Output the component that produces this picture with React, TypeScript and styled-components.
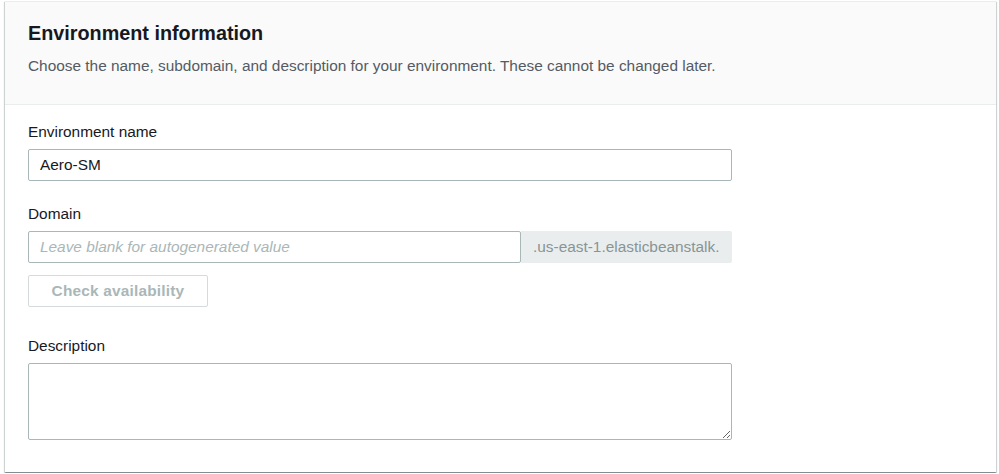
import React from 'react'
import styled, { createGlobalStyle } from 'styled-components'

const GlobalStyle = createGlobalStyle`
  body {
    margin: 0;
    background: #ffffff;
    font-family: "Liberation Sans", Arial, sans-serif;
    font-size: 15.4px;
    color: #16191f;
  }
`

const Page = styled.div`
  padding: 1px 3px 1px 5px;
`

const Panel = styled.section`
  background: #ffffff;
  box-shadow: 0 1px 1px 0 rgba(0, 28, 36, 0.3), 1px 1px 1px 0 rgba(0, 28, 36, 0.15),
    -1px 1px 1px 0 rgba(0, 28, 36, 0.15);
  border-top: 1px solid #eaeded;
`

const Header = styled.div`
  background: #fafafa;
  border-bottom: 1px solid #eaeded;
  padding: 19px 23px 28px;

  h2 {
    margin: 0;
    font-size: 19.8px;
    line-height: 24px;
    font-weight: 700;
    color: #16191f;
  }
  p {
    margin: 11px 0 0;
    font-size: 15.4px;
    line-height: 20px;
    color: #545b64;
  }
`

const Body = styled.div`
  padding: 17px 23px 32px;
  display: flex;
  flex-direction: column;
`

const Field = styled.div<{ $gap?: number }>`
  display: flex;
  flex-direction: column;
  width: 704px;
  margin-top: ${p => p.$gap ?? 0}px;
`

const Label = styled.label`
  font-size: 15.4px;
  line-height: 20px;
  color: #16191f;
  margin-bottom: 7px;
`

const TextInput = styled.input`
  box-sizing: border-box;
  height: 32px;
  width: 100%;
  border: 1px solid #aab7b8;
  border-radius: 2px;
  padding: 0 11px;
  font-family: "Liberation Sans", Arial, sans-serif;
  font-size: 15.4px;
  color: #16191f;
  background: #ffffff;
  outline: none;

  &::placeholder {
    color: #aab7b8;
    font-style: italic;
  }
`

const DomainRow = styled.div`
  display: flex;
  align-items: stretch;
  height: 32px;

  ${TextInput} {
    flex: 1;
  }
`

const Suffix = styled.span`
  display: flex;
  align-items: center;
  width: 211px;
  box-sizing: border-box;
  padding: 0 12px;
  background: #eaeded;
  color: #879596;
  font-size: 15.4px;
  border-radius: 0 2px 2px 0;
  white-space: nowrap;
`

const Button = styled.button`
  align-self: flex-start;
  margin-top: 12px;
  height: 32px;
  width: 180px;
  padding: 0;
  border: 1px solid #d5dbdb;
  border-radius: 2px;
  background: #ffffff;
  color: #aab7b8;
  font-family: "Liberation Sans", Arial, sans-serif;
  font-size: 15.4px;
  font-weight: 700;
  letter-spacing: 0.2px;
  cursor: default;
`

const TextArea = styled.textarea`
  box-sizing: border-box;
  width: 100%;
  height: 77px;
  border: 1px solid #aab7b8;
  border-radius: 2px;
  padding: 4px 11px;
  font-family: "Liberation Sans", Arial, sans-serif;
  font-size: 15.4px;
  outline: none;
  display: block;
`

export default function App() {
  return (
    <Page>
      <GlobalStyle />
      <Panel>
        <Header>
          <h2>Environment information</h2>
          <p>Choose the name, subdomain, and description for your environment. These cannot be changed later.</p>
        </Header>
        <Body>
          <Field>
            <Label>Environment name</Label>
            <TextInput defaultValue="Aero-SM" />
          </Field>
          <Field $gap={23}>
            <Label>Domain</Label>
            <DomainRow>
              <TextInput placeholder="Leave blank for autogenerated value" />
              <Suffix>.us-east-1.elasticbeanstalk.</Suffix>
            </DomainRow>
            <Button disabled>Check availability</Button>
          </Field>
          <Field $gap={29}>
            <Label>Description</Label>
            <TextArea />
          </Field>
        </Body>
      </Panel>
    </Page>
  )
}
